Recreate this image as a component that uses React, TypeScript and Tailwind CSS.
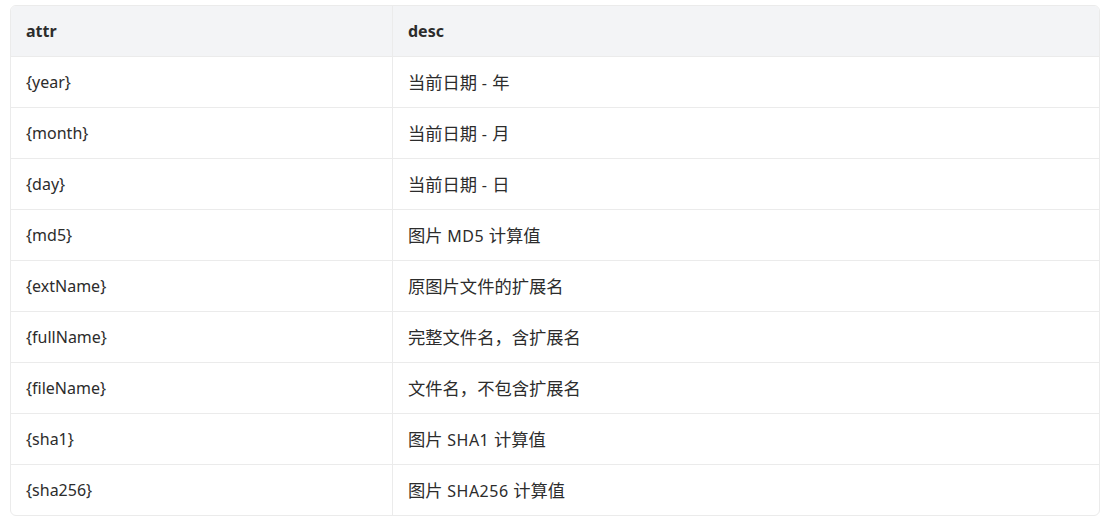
const rows: [string, string][] = [
  ["{year}", "当前日期 - 年"],
  ["{month}", "当前日期 - 月"],
  ["{day}", "当前日期 - 日"],
  ["{md5}", "图片 MD5 计算值"],
  ["{extName}", "原图片文件的扩展名"],
  ["{fullName}", "完整文件名，含扩展名"],
  ["{fileName}", "文件名，不包含扩展名"],
  ["{sha1}", "图片 SHA1 计算值"],
  ["{sha256}", "图片 SHA256 计算值"],
];

// CJK glyphs in the shot are a touch larger than the latin ones
const Mixed = ({ text }: { text: string }) => {
  const parts = text.split(/([\u3000-\u9fff\uff00-\uffef]+)/).filter(Boolean);
  return (
    <span className="whitespace-pre">
      {parts.map((p, i) =>
        /[\u3000-\u9fff\uff00-\uffef]/.test(p) ? (
          <span key={i} className="font-['Noto_Sans_CJK_SC',sans-serif] text-[17.3px]">
            {p}
          </span>
        ) : (
          <span key={i} className="tracking-[0.5px]">{p}</span>
        )
      )}
    </span>
  );
};

const App = () => {
  return (
    <div className="w-[1114px] h-[529px] bg-white pt-[5px] pl-[10px] font-['Noto_Sans','Noto_Sans_CJK_SC',sans-serif] text-[16px] text-[#2c2c2c]">
      <div className="w-[1090px] border border-[#ebebeb] rounded-[6px] overflow-hidden">
        <div className="grid grid-cols-[382px_1fr] h-[50px] bg-[#f3f4f6] font-bold">
          <div className="flex items-center pl-[15px] border-r border-[#ebebeb]">attr</div>
          <div className="flex items-center pl-[15px]">desc</div>
        </div>
        {rows.map(([attr, desc]) => (
          <div
            key={attr}
            className="grid grid-cols-[382px_1fr] h-[51px] border-t border-[#ebebeb]"
          >
            <div className="flex items-center pl-[15px] border-r border-[#ebebeb]">{attr}</div>
            <div className="flex items-center pl-[15px]">
              <Mixed text={desc} />
            </div>
          </div>
        ))}
      </div>
    </div>
  );
};

export default App;
